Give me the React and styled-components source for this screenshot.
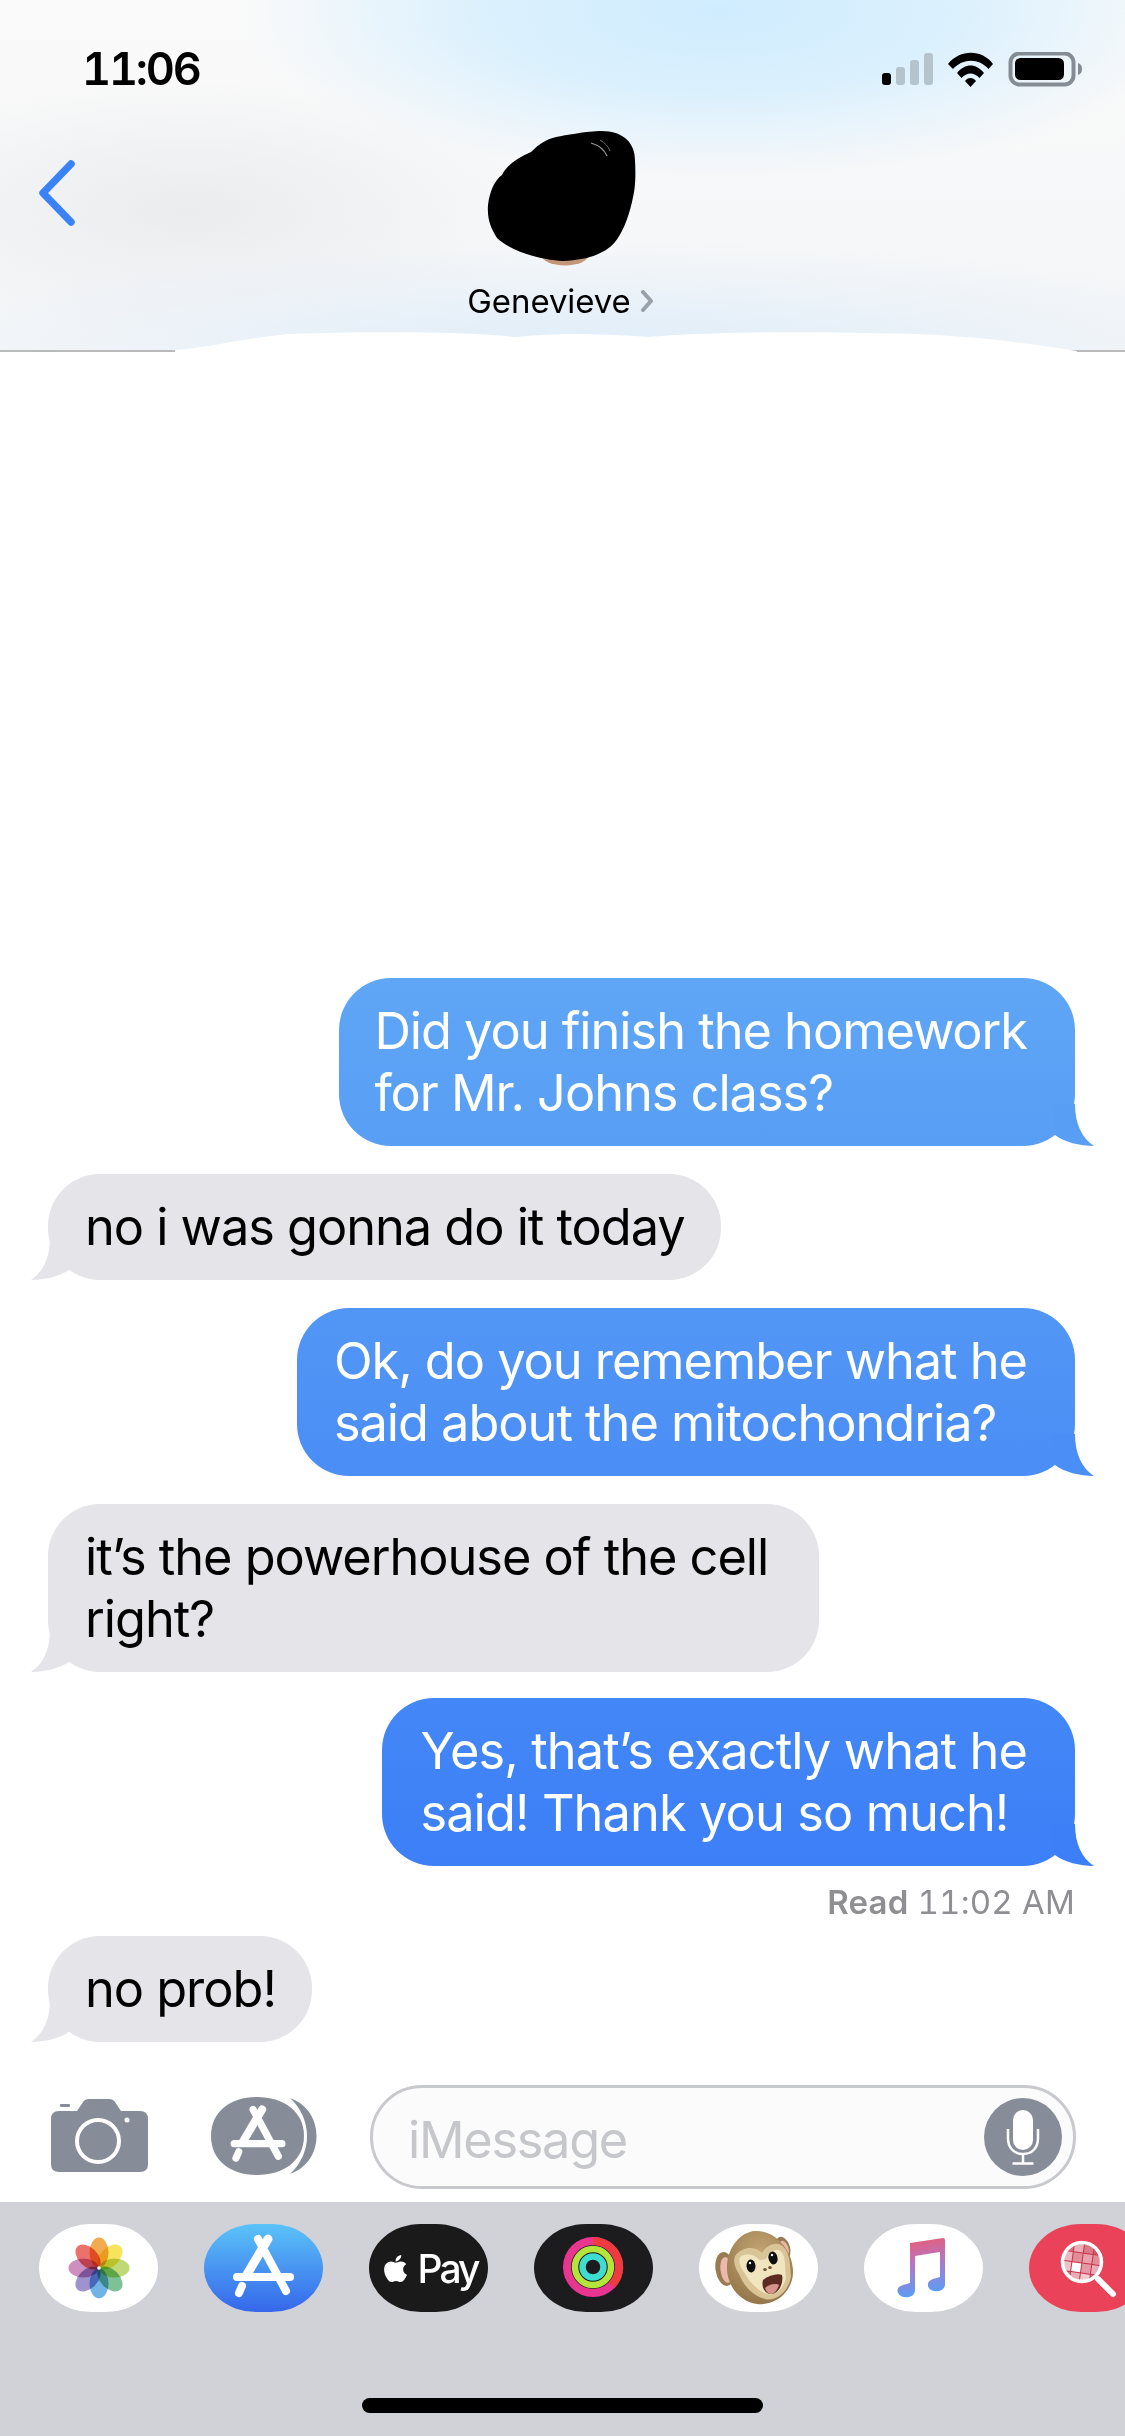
import React from "react";
import styled, { createGlobalStyle } from "styled-components";
import { FaApple } from "react-icons/fa";

const Global = createGlobalStyle`
  html, body { margin: 0; padding: 0; background: #fff; }
  * { box-sizing: border-box; }
`;

const Page = styled.div`
  width: 1125px;
  height: 2436px;
  display: flex;
  flex-direction: column;
  overflow: hidden;
  background: #fff;
  font-family: Inter, "Liberation Sans", sans-serif;
`;

const Header = styled.header`
  position: relative;
  height: 352px;
  flex: none;
  border-bottom: 2px solid #b9babc;
  background:
    radial-gradient(ellipse 480px 170px at 720px 10px, #cfecfe 0%, rgba(212,238,254,0.8) 50%, rgba(212,238,254,0) 100%),
    radial-gradient(ellipse 720px 110px at 600px 350px, #dfedf9 0%, rgba(224,238,250,0) 100%),
    radial-gradient(ellipse 340px 130px at 190px 210px, #ebecee 0%, rgba(236,237,239,0) 100%),
    linear-gradient(180deg, #fafafa 0%, #f5f6f8 100%);
`;

const StatusBar = styled.div`
  height: 130px;
  padding: 52px 43px 0 82px;
  display: flex;
  justify-content: space-between;
  align-items: flex-start;
`;

const Time = styled.div`
  font-size: 45px;
  font-weight: 600;
  line-height: 34px;
  letter-spacing: -2.2px;
  font-variant-numeric: tabular-nums;
  color: #000;
`;

const StatusIcons = styled.svg`
  width: 200px;
  height: 36px;
  display: block;
`;

const Nav = styled.nav`
  display: grid;
  grid-template-columns: 1fr auto 1fr;
`;

const Back = styled.svg`
  width: 40px;
  height: 66px;
  margin: 30px 0 0 37px;
  display: block;
`;

const Contact = styled.div`
  display: flex;
  flex-direction: column;
  align-items: center;
`;

const Avatar = styled.svg`
  width: 150px;
  height: 136px;
  display: block;
`;

const NameRow = styled.div`
  display: flex;
  align-items: center;
  gap: 8px;
  margin: 17px 3px 0 0;
  font-size: 33px;
  line-height: 36px;
  letter-spacing: -0.1px;
  color: #000;
`;

const NameChevron = styled.svg`
  width: 16px;
  height: 22px;
  display: block;
`;

const Fade = styled.svg`
  position: absolute;
  left: 175px;
  top: 332px;
  width: 902px;
  height: 22px;
`;

const Thread = styled.main`
  flex: 1;
  display: flex;
  flex-direction: column;
  justify-content: flex-end;
  padding: 0 50px 0 48px;
`;

const Bubble = styled.div`
  position: relative;
  align-self: ${(p) => (p.$mine ? "flex-end" : "flex-start")};
  padding: 22px ${(p) => p.$end ?? (p.$mine ? 48 : 36)}px 22px ${(p) => p.$start ?? 37}px;
  margin-top: ${(p) => p.$gap}px;
  border-radius: 52px;
  background: ${(p) => (p.$mine ? `linear-gradient(180deg, ${p.$from}, ${p.$to})` : "#e4e4e9")};
  color: ${(p) => (p.$mine ? "#fff" : "#000")};
  font-size: 50.5px;
  line-height: 62px;
  letter-spacing: ${(p) => p.$track ?? -1.03}px;
  white-space: nowrap;
`;

const Tail = styled.svg`
  position: absolute;
  bottom: 0;
  width: 42px;
  height: 42px;
  ${(p) => (p.$mine ? "right: -19px;" : "left: -17px; transform: scaleX(-1);")}
`;

const Receipt = styled.div`
  align-self: flex-end;
  margin: 20px 0 0;
  font-size: 33px;
  line-height: 32px;
  letter-spacing: 0.2px;
  font-variant-numeric: tabular-nums;
  color: #8e8e93;
  strong { font-weight: 600; }
`;

const Composer = styled.section`
  flex: none;
  height: 160px;
  padding: 43px 49px 0 51px;
  display: flex;
  align-items: flex-start;
`;

const CameraIcon = styled.svg`
  width: 97px;
  height: 73px;
  margin-top: 14px;
  flex: none;
`;

const AppsIcon = styled.svg`
  width: 106px;
  height: 78px;
  margin: 12px 0 0 63px;
  flex: none;
`;

const InputPill = styled.div`
  flex: 1;
  height: 104px;
  margin-left: 53px;
  border: 3px solid #c8c9cc;
  border-radius: 52px;
  background: #fbfbfc;
  display: flex;
  align-items: center;
  justify-content: space-between;
  padding: 0 11px 0 35px;
`;

const Placeholder = styled.span`
  font-size: 50.5px;
  letter-spacing: -1.3px;
  color: #c6c7cb;
  margin-top: 4px;
`;

const MicButton = styled.div`
  width: 78px;
  height: 78px;
  border-radius: 50%;
  background: #878d98;
  display: flex;
  align-items: center;
  justify-content: center;
`;

const Drawer = styled.section`
  flex: none;
  height: 234px;
  background: #d1d2d7;
  padding-top: 22px;
  position: relative;
`;

const AppRow = styled.div`
  display: flex;
  gap: 46px;
  padding-left: 39px;
  width: 1300px;
`;

const AppPill = styled.div`
  width: 119px;
  height: 88px;
  flex: none;
  border-radius: 52px / 44px;
  background: ${(p) => p.$bg};
  display: flex;
  align-items: center;
  justify-content: center;
  color: #fff;
  overflow: hidden;
`;

const PillArt = styled.svg`
  width: 119px;
  height: 88px;
  display: block;
`;

const Petal = styled.ellipse`
  mix-blend-mode: multiply;
`;

const PayLabel = styled.div`
  display: flex;
  align-items: center;
  gap: 7px;
  font-size: 39px;
  font-weight: 500;
  letter-spacing: -3px;
  line-height: 1;
`;

const HomeBar = styled.div`
  position: absolute;
  left: 362px;
  top: 196px;
  width: 401px;
  height: 15px;
  border-radius: 8px;
  background: #000;
`;

const AppStoreGlyph = ({ dx = 0, dy = 0, s = 1 }) => (
  <g transform={`translate(${dx} ${dy}) scale(${s})`} stroke="#fff" strokeLinecap="round" fill="none">
    <path d="M64 15 L42 52" strokeWidth="9" />
    <path d="M38 62 L35 69" strokeWidth="8" />
    <path d="M54 15 L82 67" strokeWidth="8" />
    <path d="M33 53 H86" strokeWidth="8" />
  </g>
);

const petals = [
  ["#f0a33c", 0], ["#f7e14a", 45], ["#b8d567", 90], ["#70ba8c", 135],
  ["#63abe2", 180], ["#9487c9", 225], ["#c683b8", 270], ["#e9625a", 315],
];

const PhotosArt = () => (
  <PillArt viewBox="0 0 119 88">
    <g transform="translate(60 44)">
      {petals.map(([c, a]) => (
        <Petal key={a} cx="0" cy="-15.5" rx="9.5" ry="15" fill={c} fillOpacity="0.9" transform={`rotate(${a})`} />
      ))}
      <circle r="1.8" fill="#fff" />
    </g>
  </PillArt>
);

const RingsArt = () => (
  <PillArt viewBox="0 0 119 88">
    <circle cx="59" cy="43" r="26" fill="none" stroke="#e8358f" strokeWidth="8" />
    <path d="M59 17 A26 26 0 0 1 78 61" fill="none" stroke="#ef3b3f" strokeWidth="8" />
    <circle cx="59" cy="43" r="18" fill="none" stroke="#b4e43c" strokeWidth="6.5" />
    <circle cx="59" cy="43" r="10.5" fill="none" stroke="#3fdcd0" strokeWidth="6.5" />
  </PillArt>
);

const MonkeyArt = () => (
  <PillArt viewBox="0 0 119 88">
    <defs>
      <radialGradient id="monkeyHead" cx="0.5" cy="0.3" r="0.8">
        <stop offset="0" stopColor="#c3a473" />
        <stop offset="1" stopColor="#8f7045" />
      </radialGradient>
    </defs>
    <ellipse cx="26" cy="45" rx="9.5" ry="17" fill="#9a7a50" transform="rotate(-8 26 45)" />
    <ellipse cx="27.5" cy="46" rx="6" ry="13" fill="#eab9ac" transform="rotate(-8 27.5 46)" />
    <ellipse cx="84" cy="24" rx="7" ry="11.5" fill="#9a7a50" transform="rotate(-18 84 24)" />
    <ellipse cx="85" cy="25" rx="4.5" ry="8.5" fill="#e9b8aa" transform="rotate(-18 85 25)" />
    <path d="M56 7 C75 6 93 24 94 46 C95 66 78 82 58 80 C40 78 27 60 28 42 C29 22 42 8 56 7 Z" fill="url(#monkeyHead)" />
    <path d="M36 32 C44 22 56 22 63 29 C68 20 80 15 87 26 C92 36 91 46 92 52 C90 68 76 78 66 75 C52 71 44 60 40 50 C36 44 34 38 36 32 Z" fill="#d9c497" />
    <path d="M41 33 C47 28 55 30 61 36 L67 35 C70 26 80 22 84 30 C87 38 86 48 87 54 C84 66 76 72 68 70 C58 67 49 56 45 48 C42 44 39 38 41 33 Z" fill="#f0e5bf" />
    <ellipse cx="52" cy="42" rx="4.5" ry="6.5" fill="#0e0e10" transform="rotate(-4 52 42)" />
    <ellipse cx="74" cy="34" rx="4.5" ry="6.5" fill="#0e0e10" transform="rotate(-12 74 34)" />
    <circle cx="51" cy="39" r="1.2" fill="#fff" />
    <circle cx="73" cy="31" r="1.2" fill="#fff" />
    <ellipse cx="66" cy="45.5" rx="1.8" ry="1.5" fill="#6d5238" />
    <ellipse cx="71" cy="43.5" rx="1.8" ry="1.5" fill="#6d5238" />
    <path d="M64 56 C70 51 79 49 83 51 C85 60 79 70 72 70 C66 70 62 63 64 56 Z" fill="#5b2b24" />
    <path d="M66 64 C70 60 77 59 80 61 C78 67 75 70 72 70 C69 70 67 67 66 64 Z" fill="#d4948a" />
  </PillArt>
);

const MusicArt = () => (
  <PillArt viewBox="0 0 119 88">
    <defs>
      <linearGradient id="noteFill" x1="0" y1="0" x2="0.15" y2="1">
        <stop offset="0" stopColor="#f0596c" />
        <stop offset="0.5" stopColor="#b277c6" />
        <stop offset="1" stopColor="#5a9df4" />
      </linearGradient>
    </defs>
    <path
      d="M46 19 L79 14 Q81 14 81 16 V60 C81 66 75 68 70 67 C63 66 62 58 67 56 C70 54 74 54 76 53 V28 L51 32 V66 C51 72 45 74 40 73 C33 72 31 64 37 62 C40 60 44 60 46 59 Z"
      fill="url(#noteFill)"
    />
  </PillArt>
);

const searchCells = [
  [-15, -15, 0.3], [-5, -15, 0.6], [5, -15, 0.35], [15, -15, 0.2],
  [-15, -5, 0.65], [-5, -5, 0.45], [5, -5, 0.55], [15, -5, 0.45],
  [-15, 5, 0.7], [-5, 5, 1], [5, 5, 0.5], [15, 5, 0.6],
  [-15, 15, 0.35], [-5, 15, 0.6], [5, 15, 0.75], [15, 15, 0.3],
];

const SearchArt = () => (
  <PillArt viewBox="0 0 119 88">
    <defs>
      <clipPath id="lens"><circle cx="53" cy="38" r="19" /></clipPath>
    </defs>
    <g clipPath="url(#lens)">
      <circle cx="53" cy="38" r="19" fill="#c93248" />
      <g transform="translate(53 38) rotate(8)" fill="#fff">
        {searchCells.map(([x, y, o]) => (
          <rect key={`${x}.${y}`} x={x - 4.5} y={y - 4.5 + 1} width="9" height="9" opacity={o} />
        ))}
      </g>
    </g>
    <circle cx="53" cy="38" r="19.5" fill="none" stroke="#fff" strokeWidth="3.5" />
    <path d="M69 55 L84 70" stroke="#fff" strokeWidth="6" strokeLinecap="round" />
  </PillArt>
);

const tailPath = "M0 0 H23 C23 20 30 34 42 42 C28 42 12 38 3 31 Z";

export default function App() {
  return (
    <Page>
      <Global />
      <Header>
        <StatusBar>
          <Time>11:06</Time>
          <StatusIcons viewBox="0 0 200 36">
            <rect x="0" y="21" width="9" height="12" rx="3" fill="#000" />
            <rect x="14" y="15" width="9" height="18" rx="3" fill="#b5c3cc" />
            <rect x="28" y="8" width="9" height="25" rx="3" fill="#b5c3cc" />
            <rect x="42" y="1" width="9" height="32" rx="3" fill="#b5c3cc" />
            <path d="M66 12 C78 -3 100 -3 111 12 L106.5 17 C97 6 81 6 71 17 Z" fill="#000" />
            <path d="M75 21 C83 11 94 11 102 21 L97.5 26 C92 20 85 20 79.5 26 Z" fill="#000" />
            <path d="M83 29 C86 25 91 25 94 29 L88.5 35 Z" fill="#000" />
            <rect x="128.5" y="1.5" width="63" height="31" rx="9" fill="none" stroke="#858c94" strokeWidth="4" />
            <rect x="133" y="6" width="49" height="22" rx="5.5" fill="#000" />
            <path d="M196 11 C199 12 200 14 200 17 C200 20 199 22 196 23 Z" fill="#858c94" />
          </StatusIcons>
        </StatusBar>
        <Nav>
          <Back viewBox="0 0 40 66">
            <path d="M34 4 L6 33 L34 62" fill="none" stroke="#3b82f6" strokeWidth="7.5" strokeLinecap="round" strokeLinejoin="round" />
          </Back>
          <Contact>
            <Avatar viewBox="0 0 150 136">
              <ellipse cx="78" cy="124" rx="24" ry="11.5" fill="#c4967a" />
              <path
                d="M112 1 C135 0 148 12 148 30 C149 50 148 60 145 72 C141 90 134 105 128 112 C118 124 100 130 76 131 C55 130 25 122 10 108 C4 98 0 90 1 75 C3 60 8 50 15 45 C20 35 30 28 44 22 C52 14 60 9 69 7 C80 5 95 2 112 1 Z"
                fill="#000"
              />
              <path d="M104 13 C111 15 117 19 120 26" fill="none" stroke="#9a9a9a" strokeWidth="1.2" />
              <path d="M113 10 C118 13 121 16 123 21" fill="none" stroke="#6a6a6a" strokeWidth="1" />
            </Avatar>
            <NameRow>
              Genevieve
              <NameChevron viewBox="0 0 16 22">
                <path d="M4 2 L12 11 L4 20" fill="none" stroke="#9aa0a8" strokeWidth="4" strokeLinecap="round" strokeLinejoin="round" />
              </NameChevron>
            </NameRow>
          </Contact>
          <div />
        </Nav>
        <Fade viewBox="0 0 902 22" preserveAspectRatio="none">
          <path d="M0 22 V18 C30 16 70 6 112 2 C200 -1 300 0 340 5 C380 1 420 1 474 5 C520 0 620 -1 740 2 C800 4 860 12 902 19 V22 Z" fill="#fff" />
        </Fade>
      </Header>

      <Thread>
        <Bubble $mine $gap={0} $start={35} $from="#5fa6f6" $to="#589ef5">
          Did you finish the homework<br />for Mr. Johns class?
          <Tail $mine viewBox="0 0 42 42"><path d={tailPath} fill="#589ef5" /></Tail>
        </Bubble>
        <Bubble $gap={28}>
          no i was gonna do it today
          <Tail viewBox="0 0 42 42"><path d={tailPath} fill="#e4e4e9" /></Tail>
        </Bubble>
        <Bubble $mine $gap={28} $from="#5296f5" $to="#4a8ef6">
          Ok, do you remember what he<br />said about the mitochondria?
          <Tail $mine viewBox="0 0 42 42"><path d={tailPath} fill="#4a8ef6" /></Tail>
        </Bubble>
        <Bubble $gap={28} $end={51}>
          it’s the powerhouse of the cell<br />right?
          <Tail viewBox="0 0 42 42"><path d={tailPath} fill="#e4e4e9" /></Tail>
        </Bubble>
        <Bubble $mine $gap={26} $track={-0.9} $start={38} $from="#4487f7" $to="#3c7ff7">
          Yes, that’s exactly what he<br />said! Thank you so much!
          <Tail $mine viewBox="0 0 42 42"><path d={tailPath} fill="#3c7ff7" /></Tail>
        </Bubble>
        <Receipt><strong>Read</strong> 11:02 AM</Receipt>
        <Bubble $gap={18}>
          no prob!
          <Tail viewBox="0 0 42 42"><path d={tailPath} fill="#e4e4e9" /></Tail>
        </Bubble>
      </Thread>

      <Composer>
        <CameraIcon viewBox="0 0 97 73">
          <path d="M26 12 L32 3 Q34 0 38 0 H58 Q62 0 64 3 L70 12 H89 Q97 12 97 20 V65 Q97 73 89 73 H8 Q0 73 0 65 V20 Q0 12 8 12 Z" fill="#878d98" />
          <rect x="9" y="5" width="10" height="3" rx="1" fill="#878d98" />
          <circle cx="47" cy="42" r="21" fill="none" stroke="#fff" strokeWidth="4" />
          <circle cx="76" cy="21" r="2.5" fill="#fff" />
        </CameraIcon>
        <AppsIcon viewBox="0 0 106 78">
          <path d="M79 1 C98 8 105.5 24 105.5 39 C105.5 54 98 70 79 77 C91 66 96 52 96 39 C96 26 91 12 79 1 Z" fill="#878d98" />
          <path d="M46 0 C72 0 93 14 93 39 C93 64 72 78 46 78 C20 78 0 64 0 39 C0 14 20 0 46 0 Z" fill="#878d98" />
          <AppStoreGlyph dx={-6.5} dy={-1} s={0.9} />
        </AppsIcon>
        <InputPill>
          <Placeholder>iMessage</Placeholder>
          <MicButton>
            <svg width="46" height="55" viewBox="0 0 46 55">
              <rect x="13" y="0" width="20" height="40" rx="10" fill="#fff" />
              <path d="M8 19 V28 C8 38 14 44 23 44 C32 44 38 38 38 28 V19" fill="none" stroke="#fff" strokeWidth="2.5" />
              <path d="M23 44 V53 M12.5 53.5 H33.5" fill="none" stroke="#fff" strokeWidth="2.5" />
            </svg>
          </MicButton>
        </InputPill>
      </Composer>

      <Drawer>
        <AppRow>
          <AppPill $bg="#fff"><PhotosArt /></AppPill>
          <AppPill $bg="linear-gradient(180deg, #5bc3f8, #3567ea)">
            <PillArt viewBox="0 0 119 88"><AppStoreGlyph /></PillArt>
          </AppPill>
          <AppPill $bg="#1a1a1a">
            <PayLabel><FaApple size={31} />Pay</PayLabel>
          </AppPill>
          <AppPill $bg="#1c1c1e"><RingsArt /></AppPill>
          <AppPill $bg="#fff"><MonkeyArt /></AppPill>
          <AppPill $bg="#fff"><MusicArt /></AppPill>
          <AppPill $bg="#ea4259"><SearchArt /></AppPill>
        </AppRow>
        <HomeBar />
      </Drawer>
    </Page>
  );
}
